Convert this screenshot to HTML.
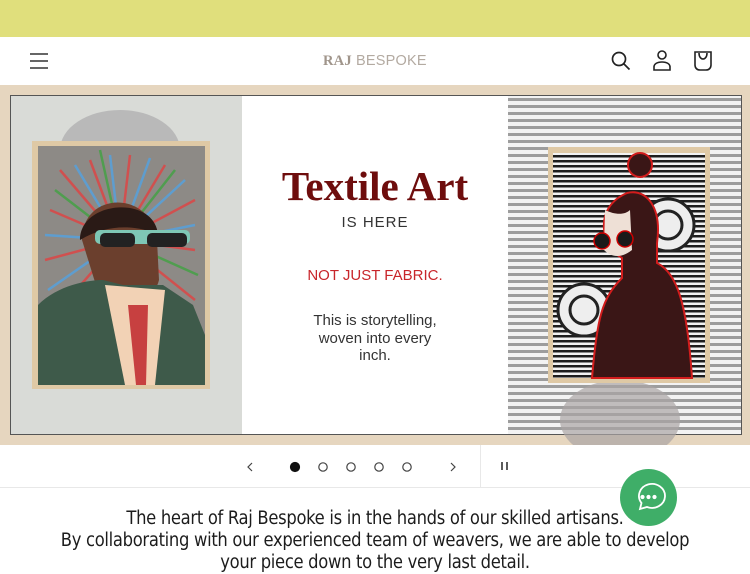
<!DOCTYPE html>
<html><head><meta charset="utf-8"><style>
*{margin:0;padding:0;box-sizing:border-box}
body{width:750px;height:563px;overflow:hidden;background:#fff;font-family:"Liberation Sans",sans-serif;position:relative}
.ann{position:absolute;left:0;top:0;width:750px;height:37px;background:#e0df7c}
.hdr{position:absolute;left:0;top:37px;width:750px;height:48px;background:#fff}
.logo{position:absolute;left:323px;top:53px;font-size:14.5px;color:#b3aaa1;letter-spacing:.2px}
.logo b{font-family:"Liberation Serif",serif;font-weight:bold;color:#a0958b}
.ban{position:absolute;left:0;top:85px;width:750px;height:360px}
.ctl{position:absolute;left:0;top:445px;width:750px;height:43px;border-bottom:1px solid #e8e8e8}
.txt{position:absolute;left:0;top:508px;width:750px;text-align:center;font-size:18.2px;line-height:22px;color:#1c1c1c;font-family:"DejaVu Sans Condensed","Liberation Sans Narrow","Liberation Sans",sans-serif;letter-spacing:-.3px}
.chat{position:absolute;left:620px;top:469px;width:57px;height:57px;border-radius:50%;background:#3fae68}
</style></head><body>
<div class="ann"></div>
<div class="hdr">
<svg style="position:absolute;left:29px;top:15px" width="20" height="18"><path d="M1 2h18M1 9h18M1 16h18" stroke="#333" stroke-width="1.6"/></svg>
<svg style="position:absolute;left:610px;top:13px" width="22" height="22" fill="none" stroke="#222" stroke-width="1.7"><circle cx="9" cy="9" r="6.5"/><path d="M14 14l5.5 5.5"/></svg>
<svg style="position:absolute;left:652px;top:12px" width="20" height="24" fill="none" stroke="#222" stroke-width="1.6"><circle cx="10" cy="6" r="4"/><path d="M2 21v-3c0-3 3-5 8-5s8 2 8 5v3z"/></svg>
<svg style="position:absolute;left:693px;top:13px" width="20" height="22" fill="none" stroke="#222" stroke-width="1.6"><path d="M2 2h16v13c0 3-2 5-5 5H7c-3 0-5-2-5-5z"/><path d="M6 3c0 4 2 6 4 6s4-2 4-6"/></svg>
</div>
<div class="logo"><b>RAJ</b> BESPOKE</div>
<svg class="ban" width="750" height="360" viewBox="0 85 750 360">
<defs><pattern id="st" width="10" height="7" patternUnits="userSpaceOnUse"><rect width="10" height="7" fill="#f3f3f3"/><rect y="0" width="10" height="3" fill="#9d9d9d"/></pattern>
<pattern id="st2" width="10" height="5" patternUnits="userSpaceOnUse"><rect width="10" height="5" fill="#f2f2f2"/><rect width="10" height="2.5" fill="#1d1d1d"/></pattern></defs>
<rect x="0" y="85" width="750" height="360" fill="#e6d6bf"/>
<rect x="10" y="95" width="732" height="340" fill="#555"/>
<rect x="11" y="96" width="231" height="338" fill="#d9dbd7"/>
<rect x="242" y="96" width="266" height="338" fill="#fff"/>
<rect x="508" y="96" width="233" height="338" fill="url(#st)"/>
<ellipse cx="120" cy="150" rx="60" ry="40" fill="#b9b9b9"/>
<ellipse cx="620" cy="420" rx="60" ry="40" fill="#a9a4a4" opacity=".7"/>
<rect x="32" y="141" width="178" height="248" fill="#dfc9a5"/>
<rect x="38" y="146" width="167" height="239" fill="#8d8a86"/>
<g stroke-width="2.5" opacity=".9"><path d="M120 240L60 170M120 240L90 160M120 240L130 155M120 240L165 165M120 240L195 200M120 240L195 250M120 240L50 210M120 240L45 260M120 240L50 320M120 240L195 300" stroke="#d84a4a"/><path d="M120 240L75 165M120 240L110 155M120 240L150 158M120 240L185 180M120 240L45 235M120 240L195 225M120 240L48 290" stroke="#5aa0d8"/><path d="M120 240L100 150M120 240L175 170M120 240L55 190M120 240L198 275" stroke="#4aa04a"/></g>
<path d="M82 240c0-50 70-50 75 0l2 40c-5 20-25 30-40 25l-20-10z" fill="#6b3f2d"/>
<path d="M80 240c0-40 75-45 78-5c-20-10-50-12-78 5z" fill="#2a1a16"/>
<rect x="95" y="230" width="95" height="14" rx="5" fill="#7ec7b5"/><rect x="100" y="233" width="35" height="14" rx="5" fill="#222"/><rect x="147" y="233" width="40" height="14" rx="5" fill="#222"/>
<path d="M38 385l0-80c20-20 50-25 65-25l20 5 40 0 30 20 12 30v50z" fill="#3e5a4a"/>
<path d="M105 285l20 100h30l10-95z" fill="#f2d2b5"/><path d="M128 305l8 80h10l2-80z" fill="#c74040"/>
<rect x="548" y="147" width="162" height="236" fill="#dfc9a5"/>
<rect x="553" y="153" width="152" height="225" fill="url(#st2)"/>
<circle cx="668" cy="225" r="26" fill="#eee" stroke="#222" stroke-width="3"/><circle cx="668" cy="225" r="14" fill="none" stroke="#222" stroke-width="3"/>
<circle cx="584" cy="310" r="26" fill="#eee" stroke="#222" stroke-width="3"/><circle cx="584" cy="310" r="14" fill="none" stroke="#222" stroke-width="3"/>
<path d="M592 378c5-60 10-80 30-100l0-20c-20-10-30-50 5-65 20-5 35 15 30 50v20c20 10 30 40 35 115z" fill="#3a1616" stroke="#d21c1c" stroke-width="2"/>
<path d="M605 210c10 5 20 5 25 0l2 40c-10 8-20 8-28 0z" fill="#eee0d6"/>
<circle cx="602" cy="241" r="8" fill="#1a1a1a" stroke="#c00" stroke-width="1.5"/><circle cx="625" cy="239" r="8" fill="#1a1a1a" stroke="#c00" stroke-width="1.5"/>
<circle cx="640" cy="165" r="12" fill="#3a1616" stroke="#d21c1c" stroke-width="2"/>
<text x="375" y="200" text-anchor="middle" font-family="Liberation Serif" font-weight="bold" font-size="41" fill="#6e0d0d">Textile Art</text>
<text x="375" y="227" text-anchor="middle" font-size="15" fill="#333" letter-spacing="1">IS HERE</text>
<text x="375" y="280" text-anchor="middle" font-size="15" fill="#c8262b">NOT JUST FABRIC.</text>
<text x="375" y="325" text-anchor="middle" font-size="15" fill="#333">This is storytelling,</text>
<text x="375" y="343" text-anchor="middle" font-size="15" fill="#333">woven into every</text>
<text x="375" y="360" text-anchor="middle" font-size="15" fill="#333">inch.</text>
</svg>
<div class="ctl">
<svg style="position:absolute;left:240px;top:15px" width="240" height="14" fill="none" stroke="#444" stroke-width="1.2"><path d="M12 3l-4 4 4 4"/><circle cx="55" cy="7" r="4.5" fill="#111" stroke="#111"/><circle cx="83" cy="7" r="4.2"/><circle cx="111" cy="7" r="4.2"/><circle cx="139" cy="7" r="4.2"/><circle cx="167" cy="7" r="4.2"/><path d="M211 3l4 4-4 4"/></svg>
<div style="position:absolute;left:480px;top:0;width:1px;height:43px;background:#e8e8e8"></div>
<svg style="position:absolute;left:500px;top:15px" width="10" height="12"><path d="M2 2v8M7 2v8" stroke="#333" stroke-width="1.6"/></svg>
</div>
<div class="txt">The heart of Raj Bespoke is in the hands of our skilled artisans.<br>By collaborating with our experienced team of weavers, we are able to develop<br>your piece down to the very last detail.</div>
<div class="chat"><svg width="57" height="57" fill="none" stroke="#fff" stroke-width="1.8"><path d="M20 40l1.5-6a13 12 0 1 1 5.5 4z"/><circle cx="22.5" cy="28" r="1.2" fill="#fff"/><circle cx="28.5" cy="28" r="1.2" fill="#fff"/><circle cx="34.5" cy="28" r="1.2" fill="#fff"/></svg></div>
</body></html>
